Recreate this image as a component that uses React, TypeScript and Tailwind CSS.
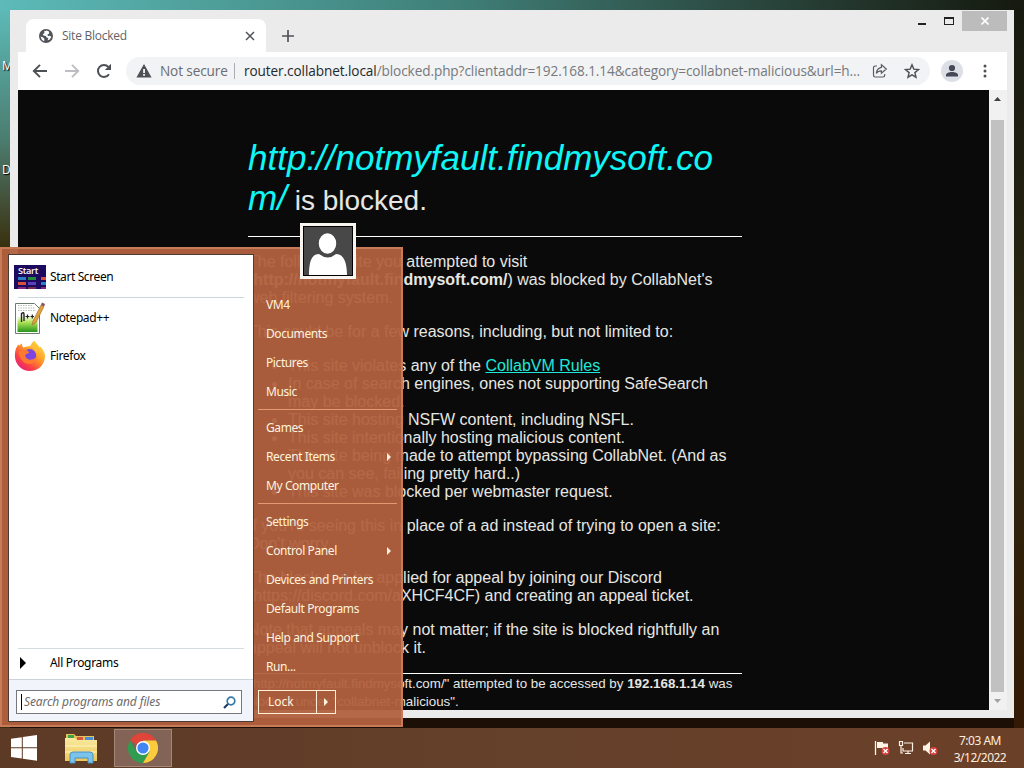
import type { ReactNode } from 'react';

const places = [
  ['VM4', 'Documents', 'Pictures', 'Music'],
  ['Games', 'Recent Items', 'My Computer'],
  ['Settings', 'Control Panel', 'Devices and Printers', 'Default Programs', 'Help and Support', 'Run...'],
];
const withSubmenu = ['Recent Items', 'Control Panel'];

function GlobeIcon() {
  return (
    <svg width="14" height="14" viewBox="0 0 14 14">
      <circle cx="7" cy="7" r="7" fill="#505358" />
      <path d="M7.6 1.5 5 2.6 5.6 4 3.8 5.2 4.4 6.6 7 7 7.6 8.6 9.4 9 8.6 11.2 10.4 10.8 12.4 8 11 6.8 9 7 8.4 5.6 10.2 4.6 10 2.6Z" fill="#fff" />
      <path d="M1.5 7.6 4.2 8.4 5.4 10 5.2 12.2 3 11Z" fill="#fff" />
    </svg>
  );
}

function BrowserToolbar() {
  return (
    <div className="flex h-[38px] items-center bg-white pl-[14px] pr-[14px]">
      <svg width="16" height="16" viewBox="0 0 16 16" fill="none" stroke="#4d5055" strokeWidth="1.9">
        <path d="M15 8H2M8 1.8 1.8 8 8 14.2" />
      </svg>
      <svg className="ml-4" width="16" height="16" viewBox="0 0 16 16" fill="none" stroke="#bcbec1" strokeWidth="1.9">
        <path d="M1 8h13M8 1.8 14.2 8 8 14.2" />
      </svg>
      <svg className="ml-4" width="16" height="16" viewBox="0 0 16 16">
        <path d="M13 11.2A6 6 0 1 1 12.4 3.9" fill="none" stroke="#4d5055" strokeWidth="2" />
        <path d="M15 .8V7H8.8Z" fill="#4d5055" />
      </svg>
      <div className="ml-[14px] flex h-7 w-[804px] items-center rounded-full bg-[#f1f3f4] pl-[10px] text-[13.6px] whitespace-nowrap">
        <svg width="16" height="14" viewBox="0 0 16 14">
          <path d="M8 0 15.6 13.4H.4Z" fill="#4d5055" />
          <path d="M7.2 5h1.7v4H7.2ZM7.2 10h1.7v1.7H7.2Z" fill="#fff" />
        </svg>
        <span className="ml-2 w-[67px] tracking-[-0.12px] text-[#6a6d71]">Not secure</span>
        <span className="ml-[7px] h-4 w-px bg-[#a9acb0]" />
        <span className="ml-[9px] w-[618px] tracking-[-0.09px] text-[#77797d]">
          <span className="text-[#26282b]">router.collabnet.local</span>
          /blocked.php?clientaddr=192.168.1.14&amp;category=collabnet-malicious&amp;url=h...
        </span>
        <svg className="ml-[10px]" width="16" height="16" viewBox="0 0 16 16" fill="none" stroke="#5a5d61" strokeWidth="1.2">
          <path d="M5 3H3.2A1.7 1.7 0 0 0 1.5 4.7V12.3A1.7 1.7 0 0 0 3.2 14H11a1.7 1.7 0 0 0 1.7-1.7V11" />
          <path d="M9.4 1.8 14.3 6 9.4 10.2V7.8C7 7.8 5.4 8.7 4.3 10.4 4.7 7.2 6.2 4.9 9.4 4.3Z" />
        </svg>
        <svg className="ml-4" width="16" height="16" viewBox="0 0 16 16" fill="none" stroke="#4d5055" strokeWidth="1.4">
          <path d="m8 1.8 1.8 4.3 4.7.4-3.6 3.1 1.1 4.6L8 11.8l-4 2.4 1.100-4.6L1.500 6.500l4.700-.4Z" />
        </svg>
      </div>
      <svg className="ml-[11px]" width="22" height="22" viewBox="0 0 22 22">
        <circle cx="11" cy="11" r="11" fill="#dcdfe5" />
        <circle cx="11" cy="8" r="3.1" fill="#454957" />
        <path d="M5 16.500V15c0-2 3-3 6-3s6 1 6 3v1.500Z" fill="#454957" />
      </svg>
      <svg className="ml-auto" width="16" height="16" viewBox="0 0 16 16" fill="#4d5055">
        <circle cx="8" cy="3" r="1.5" />
        <circle cx="8" cy="8" r="1.5" />
        <circle cx="8" cy="13" r="1.5" />
      </svg>
    </div>
  );
}

function Line({ children }: { children: ReactNode }) {
  return <div className="h-[18px] whitespace-nowrap">{children}</div>;
}

function Item({ children }: { children: ReactNode }) {
  return (
    <li className="list-disc">
      <Line>{children}</Line>
    </li>
  );
}

function BlockedPage() {
  return (
    <div className="flex-1 overflow-hidden bg-[#0a0a0a] pl-[230px] pt-[48px] font-['Liberation_Sans',Arial,sans-serif] text-[16px] leading-[18px] text-[#e6e6e2]">
      <div className="w-[494px]">
        <h1 className="h-[99px] border-b border-white text-[28px] leading-[40px] whitespace-nowrap">
          <div className="h-10">
            <em className="text-[35px] text-[#10f6f6]">http://notmyfault.findmysoft.co</em>
          </div>
          <div className="h-10">
            <em className="text-[35px] text-[#10f6f6]">m/</em> is blocked.
          </div>
        </h1>
        <div className="mt-4">
          <Line>The following site you attempted to visit</Line>
          <Line>
            (<b>http://notmyfault.findmysoft.com/</b>) was blocked by CollabNet's
          </Line>
          <Line>web filtering system.</Line>
        </div>
        <div className="mt-4">
          <Line>This could be for a few reasons, including, but not limited to:</Line>
        </div>
        <ul className="mt-4 pl-10">
          <Item>
            This site violates any of the <a className="text-[#20e8d8] underline">CollabVM Rules</a>
          </Item>
          <Item>In case of search engines, ones not supporting SafeSearch</Item>
          <Line>may be blocked.</Line>
          <Item>This site hosting NSFW content, including NSFL.</Item>
          <Item>This site intentionally hosting malicious content.</Item>
          <Item>This site being made to attempt bypassing CollabNet. (And as</Item>
          <Line>you can see, failing pretty hard..)</Line>
          <Item>This site was blocked per webmaster request.</Item>
        </ul>
        <div className="mt-4">
          <Line>If you're seeing this in place of a ad instead of trying to open a site:</Line>
          <Line>Don't worry.</Line>
        </div>
        <div className="mt-4">
          <Line>
            <span className="tracking-[0.13px]">The block can be</span> applied for appeal by joining our Discord
          </Line>
          <Line>(https://discord.com/aXHCF4CF) and creating an appeal ticket.</Line>
        </div>
        <div className="mt-4">
          <Line>Note that appeals may not matter; if the site is blocked rightfully an</Line>
          <Line>appeal will not unblock it.</Line>
        </div>
        <div className="mt-4 border-t border-white pt-px text-[13.33px]">
          <Line>
            "http://notmyfault.findmysoft.com/" attempted to be accessed by <b>192.168.1.14</b> was
          </Line>
          <Line>
            <span className="tracking-[-0.25px]">blocked under</span> "collabnet-malicious".
          </Line>
        </div>
      </div>
    </div>
  );
}

function BrowserWindow() {
  return (
    <div className="absolute left-[10px] top-[10px] flex h-[708px] w-[1004px] flex-col bg-[#ebebeb] pl-2 pr-[7px] pb-2">
      <div className="flex h-[42px] shrink-0">
        <div className="mt-[9px] ml-2 flex h-[33px] w-[240px] items-center rounded-t-lg bg-white pl-[13px] pr-[11px]">
          <GlobeIcon />
          <span className="ml-[9px] text-[12px] tracking-[-0.25px] text-[#5f6368]">Site Blocked</span>
          <svg className="ml-auto" width="10" height="10" viewBox="0 0 10 10" stroke="#505358" strokeWidth="1.5">
            <path d="m1 1 8 8M9 1 1 9" />
          </svg>
        </div>
        <svg className="mt-5 ml-4" width="12" height="12" viewBox="0 0 12 12" stroke="#505358" strokeWidth="1.7">
          <path d="M6 0v12M0 6h12" />
        </svg>
        <div className="ml-auto flex h-[21px] items-center">
          <span className="mt-[7px] h-[2px] w-2 bg-[#222]" />
          <span className="ml-[18px] h-2 w-[10px] border border-t-2 border-[#222]" />
          <span className="ml-2 flex h-[20px] w-[45px] items-center justify-center bg-[#bcbcbc]">
            <svg width="8" height="8" viewBox="0 0 8 8" stroke="#fff" strokeWidth="1.6">
              <path d="m.5.5 7 7M7.5.5l-7 7" />
            </svg>
          </span>
        </div>
      </div>
      <BrowserToolbar />
      <div className="flex h-[620px]">
        <BlockedPage />
        <div className="flex w-[18px] flex-col items-center bg-[#f1f1f1] pr-px">
          <svg className="mt-[7px] mb-[5px]" width="7" height="4" viewBox="0 0 7 4">
            <path d="M3.5 0 7 4H0Z" fill="#404040" />
          </svg>
          <div className="mt-[14px] w-[13px] flex-1 bg-[#c1c1c1]" />
          <svg className="my-[7px]" width="7" height="4" viewBox="0 0 7 4">
            <path d="M3.5 4 7 0H0Z" fill="#a0a0a0" />
          </svg>
        </div>
      </div>
    </div>
  );
}

function StartScreenIcon() {
  return (
    <svg width="32" height="24" viewBox="0 0 32 24">
      <rect width="32" height="24" fill="#1c0a5e" />
      <text x="4" y="8.8" fill="#fff" fontSize="9.2" fontWeight="600" fontFamily="Open Sans, sans-serif" textLength="20">Start</text>
      <path d="M4 12h8v3H4ZM27 17h5v3h-5Z" fill="#2a7fc4" />
      <path d="M14 12h8v3h-8Z" fill="#218a3a" />
      <path d="M27 12h5v3h-5ZM4 17h8v3H4Z" fill="#d8503c" />
      <path d="M14 17h8v3h-8Z" fill="#5b3fb8" />
      <path d="M4 22h8v2H4ZM27 22h5v2h-5Z" fill="#8a2480" />
      <path d="M14 22h8v2h-8Z" fill="#7c2a4c" />
    </svg>
  );
}

function NotepadIcon() {
  return (
    <svg width="32" height="34" viewBox="0 0 32 34">
      <defs>
        <linearGradient id="leaf" x1="0" y1="0" x2="0" y2="1">
          <stop offset="0.35" stopColor="#fff" />
          <stop offset="0.6" stopColor="#b4e45a" />
          <stop offset="1" stopColor="#27951c" />
        </linearGradient>
      </defs>
      <path d="M1.5 2.5h19l5 5v25h-24Z" fill="#fff" stroke="#6c7c6c" />
      <path d="M3.5 6h20v25h-20Z" fill="url(#leaf)" />
      <path d="M4 4.5h14M4 7h17M4 9.5h18" stroke="#b8bdb8" strokeDasharray="1.5 1" />
      <path d="M7.5 21v-8.5q2.5-2 2.5 1V20" fill="none" stroke="#222" strokeWidth="1.4" />
      <path d="M11.5 15.5h4M13.5 13.5v4M16.5 15.5h3.5M18.3 13.5v4" stroke="#222" strokeWidth="1.2" />
      <path d="m18 24 1-4 8-16 3 1.4-8 16Z" fill="#e2a03a" stroke="#9a6a2c" strokeWidth=".6" />
      <path d="m27 4 1-2.5 3 1.4L30 5.4Z" fill="#8c4c6a" />
    </svg>
  );
}

function FirefoxIcon() {
  return (
    <svg width="32" height="32" viewBox="0 0 32 32">
      <defs>
        <linearGradient id="fire" x1="1" y1="0" x2="0.15" y2="1">
          <stop offset="0" stopColor="#fff04a" />
          <stop offset="0.45" stopColor="#ff9a28" />
          <stop offset="0.75" stopColor="#fb3f46" />
          <stop offset="1" stopColor="#e31587" />
        </linearGradient>
      </defs>
      <path d="M29.5 11c-.8-2-2.5-4-4-4.8 0 0 .5 1.3.6 2.2C24.5 5 21.8 3.500 20.500.8c-2 1-3.600 3.400-3.800 5.400C12 6 9.500 7.600 9.500 7.600S7.600 6 8 3.500C6 4.400 5.300 6 5.300 6 4.800 5.600 4.800 4.500 4.800 4.500 1.500 7 .6 13 1 17.500 1.800 25 8 31 15.800 31 24 31 30.800 25 31 16.500c0-2-.5-4-1.500-5.500Z" fill="url(#fire)" />
      <circle cx="15.8" cy="15.5" r="6.4" fill="#7a45e0" />
      <path d="M5 12c3-2.5 7-2.5 9.500-.6 1 .8.5 2-1.500 2.400-1.800.4-2 1.600-1.500 3C12.300 19 15 20 18 19.500c2-.4 3.500-1.500 4.500-3C23 21 19.500 24 15.500 24 9 24 5 18 5 12Z" fill="#ff7a30" />
      <path d="M13 7.500c5-2 10 1 10.500 6.500.6-2-.3-6-4-8-2-1-5-.5-6.500 1.500Z" fill="#ffc53a" />
    </svg>
  );
}

function Program({ icon, label }: { icon: ReactNode; label: string }) {
  return (
    <div className="flex h-[38px] items-center gap-1">
      {icon}
      <span>{label}</span>
    </div>
  );
}

function StartMenu() {
  return (
    <div className="absolute left-0 top-[247px] flex h-[480px] w-[403px] border-2 border-[#c87b59] bg-[#b2613e]/95 pl-[6px] pt-[5px] font-['Noto_Sans','Open_Sans',sans-serif] text-[12px] tracking-[-0.4px]">
      <div className="flex h-[468px] w-[246px] flex-col border border-[#4b3a36] bg-white text-black">
        <div className="px-[5px] pt-[3px]">
          <Program icon={<StartScreenIcon />} label="Start Screen" />
          <div className="mx-1 mt-px h-px bg-[#c9d6da]" />
          <div className="mt-px">
            <Program icon={<NotepadIcon />} label="Notepad++" />
            <Program icon={<FirefoxIcon />} label="Firefox" />
          </div>
        </div>
        <div className="mx-[9px] mt-auto flex h-[31px] items-center border-t border-[#d5dce0] pb-[3px]">
          <svg className="ml-[2px]" width="6" height="12" viewBox="0 0 6 12">
            <path d="M0 0 6 6 0 12Z" fill="#000" />
          </svg>
          <span className="ml-[24px] tracking-[-0.3px]">All Programs</span>
        </div>
        <div className="h-[42px] border-t border-[#cdd3dc] bg-[#f1f4fb] px-[7px] pt-[10px]">
          <div className="flex h-6 w-[226px] items-center border border-[#77777c] bg-white pl-1 pr-[5px]">
            <span className="h-4 w-px bg-black" />
            <span className="ml-[2px] tracking-[-0.12px] text-[#6c6c6c] italic">Search programs and files</span>
            <svg className="ml-auto" width="13" height="13" viewBox="0 0 13 13" fill="none">
              <path d="M5.5 7.5 1 12" stroke="#1c3b66" strokeWidth="2.2" />
              <circle cx="8" cy="5" r="3.8" stroke="#3479a8" strokeWidth="1.7" />
            </svg>
          </div>
        </div>
      </div>
      <div className="flex flex-1 flex-col pr-1 pl-1 pt-[36px] text-[#fff3df]">
        {places.map((group, i) => (
          <div key={i} className={i === 0 ? 'pb-[3px]' : 'border-t border-[#e39a72] pt-[3px] pb-[3px]'}>
            {group.map((name) => (
              <div key={name} className="flex h-[29px] items-center justify-between pl-2 pr-[6px]">
                <span>{name}</span>
                {withSubmenu.includes(name) && (
                  <svg width="4" height="8" viewBox="0 0 4 8">
                    <path d="M0 0 4 4 0 8Z" fill="#fff3df" />
                  </svg>
                )}
              </div>
            ))}
          </div>
        ))}
        <div className="mt-[6px] flex h-6 w-[78px] border border-[#fff0d8]">
          <span className="flex w-[58px] items-center border-r border-[#fff0d8] pl-[9px] tracking-[0px]">Lock</span>
          <span className="flex flex-1 items-center justify-center">
            <svg width="4" height="8" viewBox="0 0 4 8">
              <path d="M0 0 4 4 0 8Z" fill="#fff3df" />
            </svg>
          </span>
        </div>
      </div>
      <div className="absolute left-[298px] top-[-26px] h-[56px] w-[56px] border-[3px] border-[#f8f4f0] bg-[#484848]">
        <svg width="50" height="50" viewBox="0 0 50 50">
          <rect x=".5" y=".5" width="49" height="49" fill="#484848" stroke="#000" />
          <path d="M6 49C6 37 8 28 16 28q9 7 17 0C41 28 44 37 44 49Z" fill="#fff" />
          <ellipse cx="24.5" cy="17.5" rx="9.5" ry="11" fill="#fff" stroke="#484848" strokeWidth="1.5" />
        </svg>
      </div>
    </div>
  );
}

function ErrorMark() {
  return (
    <>
      <circle cx="11.5" cy="11" r="4" fill="#d9413c" />
      <path d="m9.5 9 4 4m0-4-4 4" stroke="#fff" strokeWidth="1.4" />
    </>
  );
}

function Taskbar() {
  return (
    <div className="absolute left-0 top-[728px] flex h-10 w-[1024px] items-center bg-linear-to-r from-[#5c3a25] via-[#65402b] to-[#6b4029] font-['Noto_Sans','Open_Sans',sans-serif]">
      <svg className="ml-[11px]" width="26" height="26" viewBox="0 0 26 26" fill="#fff">
        <path d="M0 3.7 10.8 2.2V12.3H0ZM11.8 2 26 0V12.3H11.8ZM0 13.3H10.8V23.5L0 22ZM11.8 13.3H26V25.7L11.8 23.7Z" />
      </svg>
      <svg className="ml-[27px]" width="34" height="32" viewBox="0 0 34 32">
        <defs>
          <linearGradient id="folder" x1="0" y1="0" x2="0" y2="1">
            <stop offset="0" stopColor="#f9eaa0" />
            <stop offset="1" stopColor="#ecc758" />
          </linearGradient>
        </defs>
        <path d="M2 2h8l2 2h18v6H2Z" fill="#e4c25c" />
        <path d="M4 3h6v3H4Z" fill="#3fa04a" />
        <path d="M13 5h6v3h-6Z" fill="#d8543c" />
        <path d="M21 5h8v3h-8Z" fill="#4c8fd0" />
        <path d="M1 6h10l2 2h20v21H1Z" fill="url(#folder)" />
        <path d="M1 14h32M1 20h32" stroke="#fff5c0" />
        <path d="M6 31V23q0-3 3-3h17q3 0 3 3v8h-5v-5H11v5Z" fill="#7cc3ea" stroke="#4a8fc4" />
      </svg>
      <div className="ml-4 flex h-[38px] w-[58px] items-center justify-center border border-[#a48778] bg-[#836355]">
        <svg width="30" height="30" viewBox="0 0 30 30">
          <path d="M2 7.5A15 15 0 0 1 28 7.5H15V15Z" fill="#e0453a" />
          <path d="M2 7.5A15 15 0 0 0 15 30l6.5-11.2L15 15 8.5 18.7Z" fill="#2f9c50" />
          <path d="M28 7.5A15 15 0 0 1 15 30l6.5-11.2L15 7.5Z" fill="#fbcb3c" />
          <circle cx="15" cy="15" r="7" fill="#fff" />
          <circle cx="15" cy="15" r="5.6" fill="#4285f4" />
        </svg>
      </div>
      <div className="ml-auto flex items-center gap-2 pr-[17px]">
        <svg width="16" height="16" viewBox="0 0 16 16">
          <path d="M1.5 1v14" stroke="#fff3e6" strokeWidth="1.3" />
          <path d="M3 2h6v1.5h5V9H8V8H3Z" fill="#fff3e6" />
          <ErrorMark />
        </svg>
        <svg width="16" height="16" viewBox="0 0 16 16" fill="none" stroke="#fff3e6" strokeWidth="1.2">
          <path d="M6 3h8.500v8H5V8M7 13.500h6M10 11v2.500M1.500 1.500h3v4h-3ZM3 5.500V13h2" />
        </svg>
        <svg width="16" height="16" viewBox="0 0 16 16">
          <path d="M1 5.5h2.5L8 1.5v13l-4.5-4H1Z" fill="#fff3e6" />
          <ErrorMark />
        </svg>
        <div className="ml-[7px] w-[54px] text-center text-[12px] leading-[17px] tracking-[-0.5px] whitespace-nowrap text-[#ffeede]">
          <div className="pt-px">7:03 AM</div>
          <div>3/12/2022</div>
        </div>
      </div>
    </div>
  );
}

export default function App() {
  return (
    <div className="relative h-[768px] w-[1024px] overflow-hidden bg-[#1c0f05] font-['Open_Sans','Noto_Sans',sans-serif]">
      <div className="h-[10px] bg-linear-to-r from-[#5cbab8] via-[#3f7f78] via-45% to-[#15190f]" />
      <div className="flex h-[718px] justify-between text-[12px] text-white">
        <div className="w-[10px] overflow-hidden bg-linear-to-b from-[#5cbab8] via-[#4b7d70] via-18% to-[#38300c] to-33% pl-[2px] text-shadow-[1px_1px_1px_#000]">
          <div className="mt-[47px]">My</div>
          <div className="mt-[86px]">Do</div>
        </div>
        <div className="w-[10px] bg-linear-to-b from-[#171a10] via-[#2b2610] to-[#341a05]" />
      </div>
      <BrowserWindow />
      <StartMenu />
      <Taskbar />
    </div>
  );
}
